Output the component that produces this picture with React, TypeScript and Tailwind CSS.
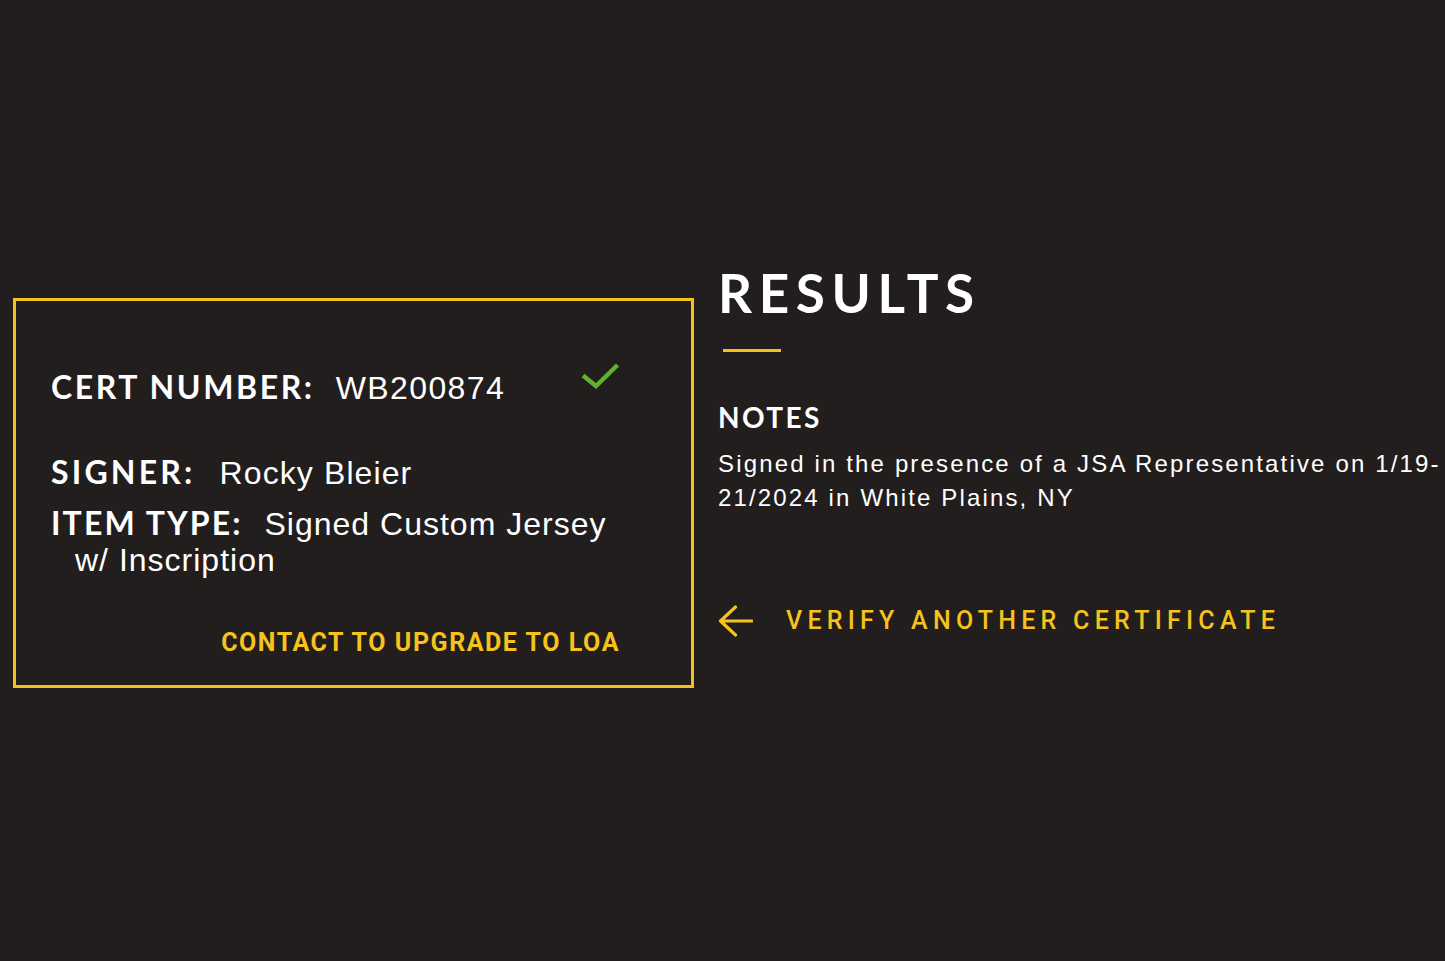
import React from "react";

export default function App() {
  return (
    <div className="w-full h-[961px] bg-[#221e1e] flex items-start overflow-hidden">
      {/* Left certificate box */}
      <div className="ml-[13px] mt-[298px] w-[681px] h-[390px] shrink-0 border-[3px] border-[#f4c01d] pl-[35px] pr-[71px] pt-[66px] flex flex-col">
        <div className="flex items-start">
          <div className="flex items-baseline leading-[40px]">
            <span className="font-['Lato',sans-serif] font-bold text-[32px] tracking-[2.6px] text-white">
              CERT NUMBER:
            </span>
            <span className="ml-[21px] font-['Liberation_Sans',Arial,sans-serif] text-[32px] tracking-[1.4px] text-white">
              WB200874
            </span>
          </div>
          <svg
            className="ml-auto -mt-[5px]"
            width="40"
            height="28"
            viewBox="0 0 40 28"
            fill="none"
          >
            <path
              d="M3 13.5 L16 24 L37.5 3"
              stroke="#5fb12f"
              strokeWidth="4.5"
              strokeLinecap="butt"
              strokeLinejoin="miter"
            />
          </svg>
        </div>

        <div className="mt-[44px] flex items-baseline leading-[40px]">
          <span className="font-['Lato',sans-serif] font-bold text-[32px] tracking-[3.2px] text-white">
            SIGNER:
          </span>
          <span className="ml-[24px] font-['Liberation_Sans',Arial,sans-serif] text-[32px] tracking-[1.1px] text-white">
            Rocky Bleier
          </span>
        </div>

        <div className="mt-[12px] pl-[24px] -indent-[24px] font-['Liberation_Sans',Arial,sans-serif] text-[32px] leading-[36px] tracking-[1px] text-white">
          <span className="font-['Lato',sans-serif] font-bold tracking-[2.1px]">ITEM TYPE:</span>
          <span className="ml-[22px]">Signed Custom Jersey</span>
          <br />
          <span>w/ Inscription</span>
        </div>

        <div className="mt-[50px] text-right font-['Roboto',sans-serif] font-bold text-[25px] leading-[30px] tracking-[1.55px] text-[#f6c21d]">
          CONTACT TO UPGRADE TO LOA
        </div>
      </div>

      {/* Right results column */}
      <div className="ml-[24px] mt-[262.5px] flex flex-col">
        <h1 className="font-['Lato',sans-serif] font-bold text-[53px] leading-[60px] tracking-[6.6px] text-white">
          RESULTS
        </h1>
        <div className="ml-[5px] mt-[26.5px] w-[58px] h-[3px] bg-[#f4c01d]" />
        <h2 className="mt-[48px] font-['Lato',sans-serif] font-bold text-[28px] leading-[34px] tracking-[2.4px] text-white">
          NOTES
        </h2>
        <p className="mt-[12.5px] font-['Liberation_Sans',Arial,sans-serif] text-[24px] leading-[34px] tracking-[2.15px] text-white whitespace-nowrap">
          Signed in the presence of a JSA Representative on 1/19-
          <br />
          21/2024 in White Plains, NY
        </p>
        <div className="mt-[90px] flex items-center">
          <svg width="36" height="32" viewBox="0 0 36 32" fill="none" className="shrink-0 -ml-[1px]">
            <path
              d="M35 16 H4 M18.5 2 L3.5 16 L18.5 30"
              stroke="#f6c21d"
              strokeWidth="3.2"
              strokeLinecap="round"
              strokeLinejoin="round"
            />
          </svg>
          <span className="ml-[33px] font-['Roboto',sans-serif] font-medium text-[25px] leading-[30px] tracking-[5.25px] text-[#f6c21d]">
            VERIFY ANOTHER CERTIFICATE
          </span>
        </div>
      </div>
    </div>
  );
}
